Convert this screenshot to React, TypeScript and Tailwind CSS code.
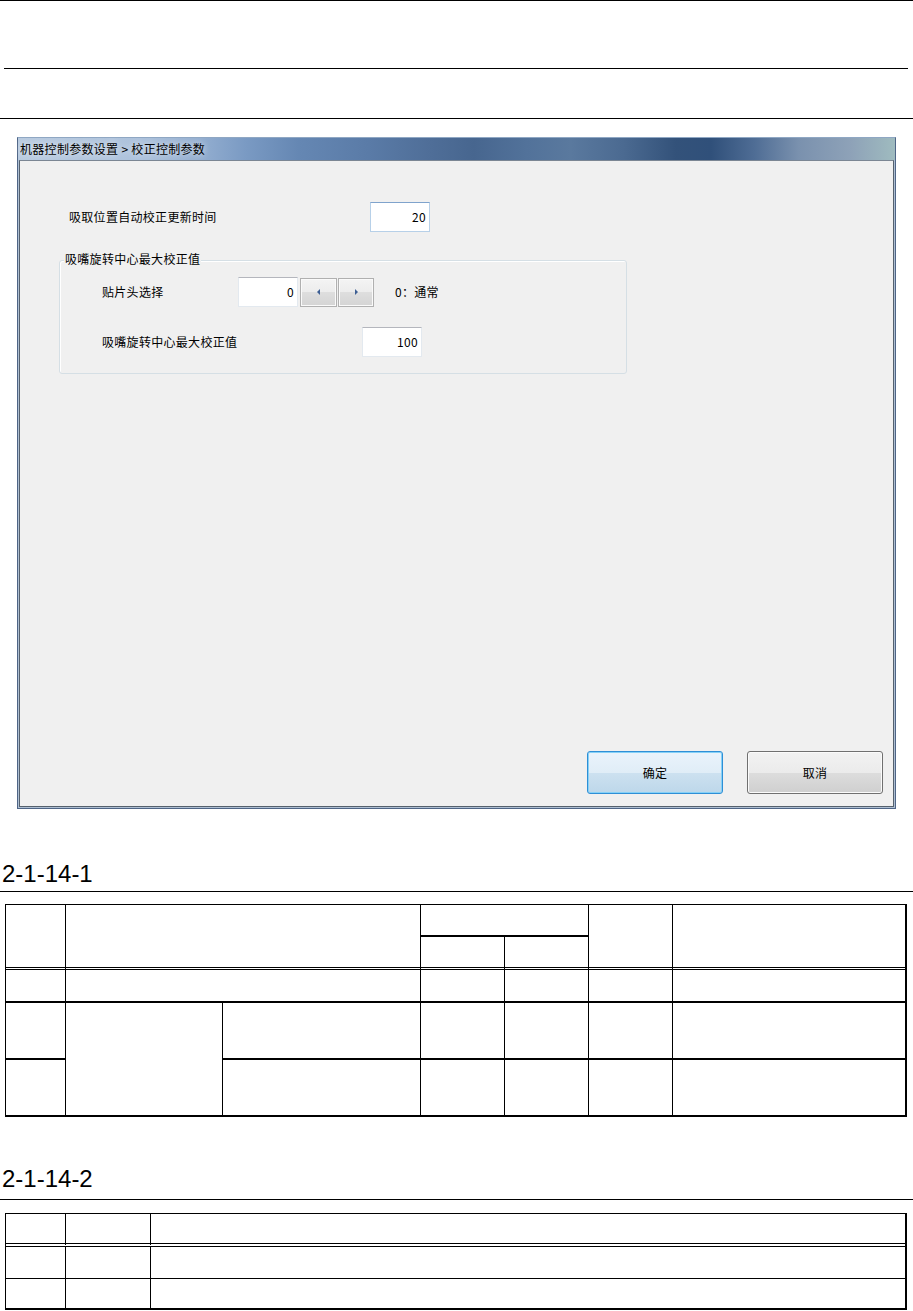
import React from "react";

function Field({ value, focused }: { value: string; focused?: boolean }) {
  return (
    <div
      className={
        focused
          ? "w-[60px] h-[30px] shrink-0 bg-white border border-[#b7d0e8] border-t-[#7fa3cc] flex items-center justify-end pr-[3px]"
          : "w-[60px] h-[30px] shrink-0 bg-white border border-[#e3e9ef] border-t-[#b4b6bd] flex items-center justify-end pr-[3px]"
      }
    >
      {value}
    </div>
  );
}

function Spin({ right }: { right?: boolean }) {
  return (
    <div
      className={
        right
          ? "ml-[1px] w-[36px] h-[29px] shrink-0 border border-[#b0b0b0] shadow-[inset_0_0_0_1px_#fafafa] bg-[linear-gradient(#f4f4f4,#ececec_50%,#dedede_50%,#d4d4d4)] flex items-center justify-center"
          : "ml-[2px] w-[37px] h-[29px] shrink-0 border border-[#b0b0b0] shadow-[inset_0_0_0_1px_#fafafa] bg-[linear-gradient(#f4f4f4,#ececec_50%,#dedede_50%,#d4d4d4)] flex items-center justify-center"
      }
    >
      <svg width="4" height="6" viewBox="0 0 4 6">
        {right ? (
          <path d="M1 0V6L4 3Z" fill="#3d5f94" />
        ) : (
          <path d="M3 0V6L0 3Z" fill="#3d5f94" />
        )}
      </svg>
    </div>
  );
}

function Dialog() {
  return (
    <div className="mt-[18px] ml-[17px] w-[879px] h-[672px] flex flex-col border border-[#4f6586] border-t-[#8fa7c3] bg-[#aebfd3] font-['Noto_Sans_CJK_SC',sans-serif] text-[12px] leading-[16px] tracking-[0.3px] text-black">
      <div className="h-[22px] shrink-0 flex items-center pl-[2px] bg-[linear-gradient(90deg,#b9cbe0_0%,#adc2dc_14%,#97b1d2_20%,#7a9ac3_26%,#6587b3_32%,#5a7ba7_40%,#4f6e98_47%,#47668f_52%,#52729a_58%,#5a799e_63%,#4b6a91_69%,#33527a_75%,#30507a_79%,#4f6d95_84%,#7a91ae_89%,#8ea2b8_95%,#9fbbbf_100%)]">
        <span className="[text-shadow:0_0_6px_rgba(255,255,255,0.85)]">机器控制参数设置 &gt; 校正控制参数</span>
      </div>
      <div className="flex-1 mx-px mb-px border border-[#56616d] border-t-[#7b8693] bg-[#f0f0f0] flex flex-col">
        <div className="mt-[41px] ml-[49px] flex items-center h-[30px]">
          <span className="w-[301px] shrink-0">吸取位置自动校正更新时间</span>
          <Field value="20" focused />
        </div>

        <div className="relative mt-[28px] ml-[39px] w-[568px] h-[114px] border border-[#d5dfe5] rounded-[3px] shadow-[inset_1px_1px_0_#ffffff] pt-[16px] pl-[42px]">
          <span className="absolute left-[4px] -top-[10px] px-px bg-[#f0f0f0]">吸嘴旋转中心最大校正值</span>
          <div className="flex items-center h-[30px]">
            <span className="w-[136px] shrink-0">贴片头选择</span>
            <Field value="0" />
            <Spin />
            <Spin right />
            <span className="ml-[21px]">0：通常</span>
          </div>
          <div className="mt-[20px] flex items-center h-[30px]">
            <span className="w-[260px] shrink-0">吸嘴旋转中心最大校正值</span>
            <Field value="100" />
          </div>
        </div>

        <div className="mt-auto flex justify-end gap-[24px] pr-[10px] pb-[12px]">
          <button className="w-[136px] h-[43px] rounded-[3px] border border-[#2e8fd6] shadow-[inset_0_0_0_1px_#86d1f7] bg-[linear-gradient(#eaf3fb,#e0edf7_50%,#cde1f0_50%,#bdd7ea)] flex items-center justify-center">
            确定
          </button>
          <button className="w-[136px] h-[43px] rounded-[3px] border border-[#707070] shadow-[inset_0_0_0_1px_#fbfbfb] bg-[linear-gradient(#f2f2f2,#ebebeb_50%,#dddddd_50%,#cfcfcf)] flex items-center justify-center">
            取消
          </button>
        </div>
      </div>
    </div>
  );
}

function Table1() {
  return (
    <div className="ml-[5px] w-[902px] grid grid-cols-[60px_157px_198px_84px_84px_84px_232px] grid-rows-[32px_33px_33px_57px_55px] border-t border-l border-r-2 border-b-2 border-black">
      {/* header */}
      <div className="col-start-1 row-start-1 row-span-2 border-r border-b-[3px] border-double border-black" />
      <div className="col-start-2 col-span-2 row-start-1 row-span-2 border-r border-b-[3px] border-double border-black" />
      <div className="col-start-4 col-span-2 row-start-1 border-r border-b-2 border-black" />
      <div className="col-start-4 row-start-2 border-r border-b-[3px] border-double border-black" />
      <div className="col-start-5 row-start-2 border-r border-b-[3px] border-double border-black" />
      <div className="col-start-6 row-start-1 row-span-2 border-r border-b-[3px] border-double border-black" />
      <div className="col-start-7 row-start-1 row-span-2 border-b-[3px] border-double border-black" />
      {/* row 1 */}
      <div className="col-start-1 row-start-3 border-r border-b-2 border-black" />
      <div className="col-start-2 col-span-2 row-start-3 border-r border-b-2 border-black" />
      <div className="col-start-4 row-start-3 border-r border-b-2 border-black" />
      <div className="col-start-5 row-start-3 border-r border-b-2 border-black" />
      <div className="col-start-6 row-start-3 border-r border-b-2 border-black" />
      <div className="col-start-7 row-start-3 border-b-2 border-black" />
      {/* row 2 */}
      <div className="col-start-1 row-start-4 border-r border-b-2 border-black" />
      <div className="col-start-2 row-start-4 row-span-2 border-r border-black" />
      <div className="col-start-3 row-start-4 border-r border-b-2 border-black" />
      <div className="col-start-4 row-start-4 border-r border-b-2 border-black" />
      <div className="col-start-5 row-start-4 border-r border-b-2 border-black" />
      <div className="col-start-6 row-start-4 border-r border-b-2 border-black" />
      <div className="col-start-7 row-start-4 border-b-2 border-black" />
      {/* row 3 */}
      <div className="col-start-1 row-start-5 border-r border-black" />
      <div className="col-start-3 row-start-5 border-r border-black" />
      <div className="col-start-4 row-start-5 border-r border-black" />
      <div className="col-start-5 row-start-5 border-r border-black" />
      <div className="col-start-6 row-start-5 border-r border-black" />
      <div className="col-start-7 row-start-5" />
    </div>
  );
}

function Table2() {
  return (
    <div className="ml-[5px] w-[902px] grid grid-cols-[60px_85px_754px] grid-rows-[33px_32px_29px] border-t border-l border-r-2 border-b-2 border-black">
      <div className="border-r border-b-4 border-double border-black" />
      <div className="border-r border-b-4 border-double border-black" />
      <div className="border-b-4 border-double border-black" />
      <div className="border-r border-b border-black" />
      <div className="border-r border-b border-black" />
      <div className="border-b border-black" />
      <div className="border-r border-black" />
      <div className="border-r border-black" />
      <div />
    </div>
  );
}

export default function App() {
  return (
    <div className="w-[913px] h-[1311px] bg-white overflow-hidden font-['Liberation_Sans',Arial,sans-serif] text-black">
      <div className="h-px bg-black" />
      <div className="mt-[67px] ml-[4px] w-[904px] h-px bg-black" />
      <div className="mt-[49px] h-px bg-black" />
      <Dialog />
      <h2 className="mt-[53px] ml-[2px] text-[24px] leading-[24px] font-normal">2-1-14-1</h2>
      <div className="mt-[5px] h-px bg-black" />
      <div className="mt-[12px]">
        <Table1 />
      </div>
      <h2 className="mt-[50px] ml-[2px] text-[24px] leading-[24px] font-normal">2-1-14-2</h2>
      <div className="mt-[8px] h-px bg-black" />
      <div className="mt-[13px]">
        <Table2 />
      </div>
    </div>
  );
}
